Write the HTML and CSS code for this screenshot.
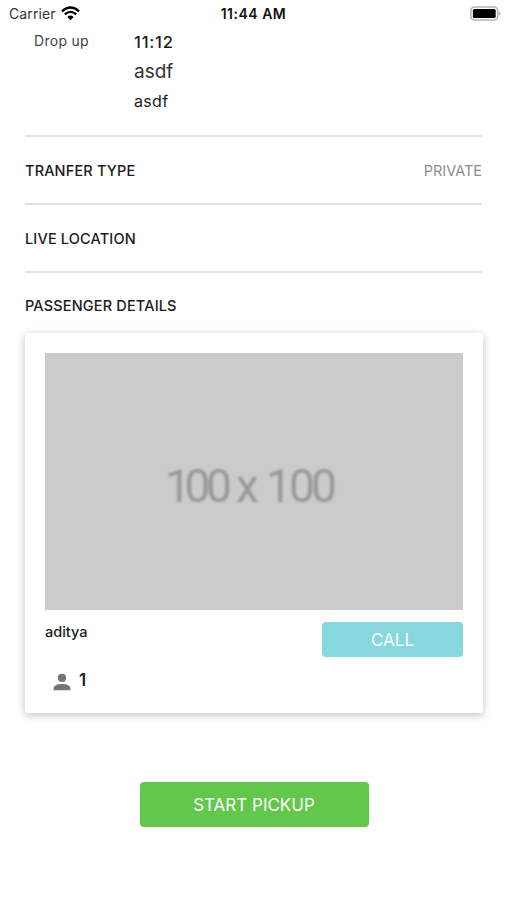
FILE: index.html
```html
<!DOCTYPE html>
<html lang="en">
<head>
    <meta charset="UTF-8">
    <meta name="viewport" content="width=device-width, initial-scale=1.0">
    <title>Pickup Details</title>
    <link rel="stylesheet" href="styles.css">
</head>
<body>
    <div class="status-bar">
        <div class="carrier">
            <span>Carrier</span>
            <svg class="wifi" width="19" height="15" viewBox="0 0 19 15">
                <path d="M1 5.3 Q9.5 -2.3 18 5.3" fill="none" stroke="#000" stroke-width="2.3"/>
                <path d="M3.8 8.4 Q9.5 3.4 15.2 8.4" fill="none" stroke="#000" stroke-width="2.2"/>
                <path d="M6.3 11 Q9.5 8.2 12.7 11 L9.5 14.3 Z" fill="#000"/>
            </svg>
        </div>
        <div class="clock">11:44 AM</div>
        <svg class="battery" width="31" height="16" viewBox="0 0 31 16">
            <rect x="0.9" y="1.1" width="26.8" height="13" rx="3.6" fill="#fff" stroke="#b4b4b4" stroke-width="1.5"/>
            <rect x="2.9" y="3.1" width="22.8" height="9" rx="1.5" fill="#000"/>
            <path d="M28.8 5.4 Q30.6 6.2 30.6 7.6 Q30.6 9 28.8 9.8 Z" fill="#b4b4b4"/>
        </svg>
    </div>

    <div class="drop">
        <div class="drop-label">Drop up</div>
        <div class="drop-info">
            <div class="drop-time">11:12</div>
            <div class="drop-name">asdf</div>
            <div class="drop-address">asdf</div>
        </div>
    </div>

    <div class="details">
        <div class="row">
            <span class="title">TRANFER TYPE</span>
            <span class="value">PRIVATE</span>
        </div>
        <div class="row">
            <span class="title">LIVE LOCATION</span>
        </div>
        <div class="row">
            <span class="title">PASSENGER DETAILS</span>
        </div>
    </div>

    <div class="card">
        <svg class="photo" width="418" height="257" viewBox="0 0 418 257">
            <rect width="418" height="257" fill="#cbcbcb"/>
            <text class="photo-text" y="149" x="120 139.5 161 191 221 244 266">100x100</text>
        </svg>
        <div class="card-row">
            <div class="name">aditya</div>
            <div class="button call">CALL</div>
        </div>
        <div class="seats">
            <svg class="person" width="18" height="18" viewBox="0 0 18 18">
                <circle cx="9" cy="4.9" r="4.1" fill="#757575"/>
                <path d="M0.6 17.2 V15 C0.6 12.4 5 10.9 9 10.9 C13 10.9 17.4 12.4 17.4 15 V17.2 Z" fill="#757575"/>
            </svg>
            <span class="count">1</span>
        </div>
    </div>

    <div class="button start">START PICKUP</div>
</body>
</html>
```

FILE: styles.css
```css
/* General Styles */
* {
    box-sizing: border-box;
}
body {
    font-family: Inter, "Liberation Sans", sans-serif;
    background-color: #fff;
    color: #1c1c1c;
    margin: 0;
    height: 900px;
    overflow: hidden;
}

/* Status bar */
.status-bar {
    display: grid;
    grid-template-columns: 1fr auto 1fr;
    align-items: center;
    height: 27px;
    padding: 0 6px 0 9px;
    font-size: 14px;
}
.carrier {
    display: flex;
    align-items: center;
    gap: 5px;
    color: #333;
    letter-spacing: 0.1px;
}
.clock {
    margin-right: 3px;
    color: #111;
    font-weight: 600;
    letter-spacing: 0.5px;
}
.battery {
    justify-self: end;
}

/* Drop */
.drop {
    display: flex;
    height: 108.4px;
    padding-left: 34px;
}
.drop-label {
    width: 100px;
    padding-top: 4px;
    font-size: 14px;
    line-height: 20px;
    letter-spacing: 0.3px;
    color: #444;
}
.drop-time {
    font-size: 16.5px;
    line-height: 30px;
    font-weight: 500;
    letter-spacing: 0.8px;
}
.drop-name {
    font-size: 19px;
    line-height: 29px;
    color: #333;
}
.drop-address {
    font-size: 16px;
    line-height: 30px;
    letter-spacing: 0.3px;
}

/* Rows */
.details {
    margin: 0 25px;
}
.row {
    display: flex;
    align-items: center;
    justify-content: space-between;
    height: 67.6px;
    border-top: 2px solid #e2e2e2;
}
.title {
    padding-top: 1px;
    font-size: 14.5px;
    font-weight: 500;
    letter-spacing: 0.16px;
}
.value {
    padding-top: 1px;
    font-size: 14.5px;
    color: #8c8c8c;
}

/* Passenger card */
.card {
    height: 380px;
    margin: -5px 24px 0 25px;
    padding: 20px;
    border-radius: 3px;
    background-color: #fff;
    box-shadow: 0 2px 8px rgba(0, 0, 0, 0.25);
}
.photo {
    display: block;
}
.photo-text {
    font-family: Roboto, "Liberation Sans", sans-serif;
    font-size: 46px;
    fill: #989898;
    filter: blur(1.2px);
}
.card-row {
    display: flex;
    justify-content: space-between;
    padding-top: 12px;
}
.name {
    font-size: 14.5px;
    line-height: 19px;
    font-weight: 500;
}
.button {
    display: flex;
    align-items: center;
    justify-content: center;
    border-radius: 4px;
    color: #fff;
}
.call {
    width: 141px;
    height: 35px;
    background-color: #86d7de;
    font-size: 17px;
}
.seats {
    display: flex;
    align-items: center;
    gap: 8px;
    padding: 12px 0 0 8px;
}
.person {
    margin-top: 4px;
}
.count {
    font-size: 17px;
    line-height: 20px;
    font-weight: 600;
}
.start {
    width: 229px;
    height: 45px;
    margin: 69px 0 0 140px;
    padding-right: 1px;
    background-color: #63c74b;
    font-size: 17px;
}
```
